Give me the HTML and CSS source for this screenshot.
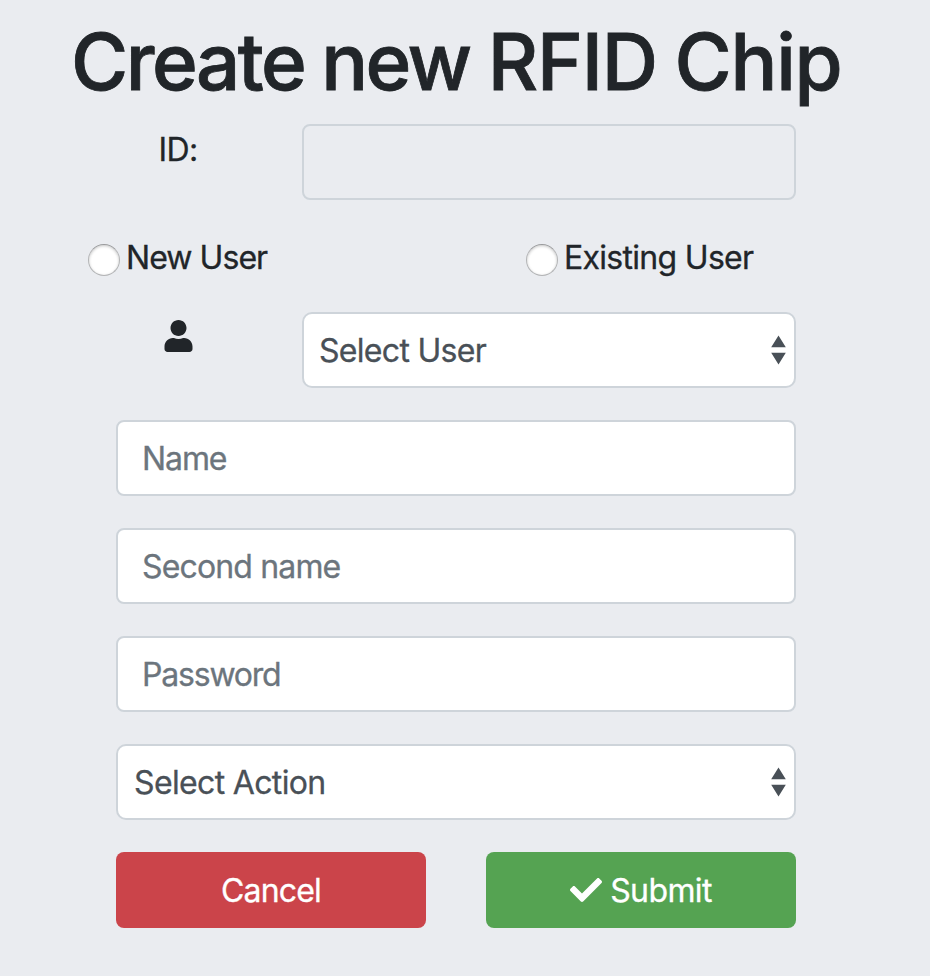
FILE: index.html
```html
<!DOCTYPE html>
<html lang="en">
<head>
<meta charset="utf-8">
<title>Create new RFID Chip</title>
<link rel="stylesheet" href="styles.css">
</head>
<body>
<form class="chip-form">
  <h1 class="title"><span class="lead">Create new</span> RFID Chip</h1>
  <div class="row">
    <label class="label" for="chip"><span class="text w-id">ID:</span></label>
    <input class="control disabled" id="chip" disabled>
  </div>
  <div class="radios">
    <label class="radio"><span class="dot"></span><span class="text w-new">New User</span></label>
    <label class="radio"><span class="dot"></span><span class="text w-existing">Existing User</span></label>
  </div>
  <div class="row">
    <div class="label"><svg class="user" viewBox="0 0 448 512"><path d="M224 256c70.700 0 128-57.300 128-128S294.700 0 224 0 96 57.300 96 128s57.300 128 128 128zm89.600 32h-16.700c-22.200 10.200-46.900 16-72.900 16s-50.600-5.800-72.900-16h-16.700C60.200 288 0 348.200 0 422.400V464c0 26.500 21.500 48 48 48h352c26.500 0 48-21.500 48-48v-41.600c0-74.200-60.200-134.400-134.400-134.400z"/></svg></div>
    <div class="control select"><span class="text w-suser">Select User</span><svg class="arrows" viewBox="0 0 15 30"><path d="M7.500.5L.2 12.300h14.600zM7.500 29.500L.2 17.700h14.600z"/></svg></div>
  </div>
  <div class="control field"><span class="text w-name">Name</span></div>
  <div class="control field"><span class="text w-second">Second name</span></div>
  <div class="control field"><span class="text w-pass">Password</span></div>
  <div class="control select"><span class="text w-saction">Select Action</span><svg class="arrows" viewBox="0 0 15 30"><path d="M7.500.5L.2 12.300h14.600zM7.500 29.500L.2 17.700h14.600z"/></svg></div>
  <div class="actions">
    <button class="btn cancel" type="button"><span class="text w-cancel">Cancel</span></button>
    <button class="btn submit" type="button"><svg class="check" viewBox="0 0 512 512"><path d="M173.898 439.404l-166.400-166.400c-9.997-9.997-9.997-26.206 0-36.204l36.203-36.204c9.997-9.998 26.207-9.998 36.204 0L192 312.690 432.095 72.596c9.997-9.997 26.207-9.997 36.204 0l36.203 36.204c9.997 9.997 9.997 26.206 0 36.204l-294.400 294.401c-9.998 9.997-26.207 9.997-36.204-.001z"/></svg><span class="text w-submit">Submit</span></button>
  </div>
</form>
</body>
</html>
```
FILE: styles.css
```css
* { box-sizing: border-box; }
body { margin: 0; min-height: 976px; background: #eaecf0; color: #212529; font: 32px/48px Inter, sans-serif; }
span { white-space: nowrap; }
.chip-form { width: 680px; margin-left: 116px; padding-top: 14px; display: flex; flex-direction: column; }
.title { margin: 0 -44px 14px -45px; font-size: 78px; line-height: 96px; font-weight: 500; letter-spacing: -1.300px; word-spacing: -1.500px; white-space: nowrap; -webkit-text-stroke: .8px; }
.lead { letter-spacing: -2.500px; }
.row { display: flex; justify-content: space-between; margin-bottom: 32px; }
.label { width: 124px; height: 48px; text-align: center; }
.control { display: flex; align-items: center; width: 100%; height: 76px; margin-bottom: 32px; border: 2px solid #ced4da; border-radius: 8px; background: #fff; color: #495057; }
.row .control { width: 494px; margin: 0; }
.control.disabled { background: transparent; }
.field { padding: 0 24px; color: #6c757d; }
.select { justify-content: space-between; padding: 0 8px 0 15px; border-radius: 10px; }
.arrows { width: 15px; height: 30px; fill: #495057; }
.radios { display: flex; margin: 0 -28px 32px; height: 48px; }
.radio { display: flex; width: 438px; flex-shrink: 0; gap: 6px; }
.dot { width: 32px; height: 32px; margin-top: 12px; border: 1px solid #b3b4b6; border-top-color: #999a9c; border-radius: 50%; background: #fff; box-shadow: inset 0 1px 3px rgba(0, 0, 0, .22); }
.user { width: 29px; height: 32px; margin: 8px 0 0 1px; fill: #212529; }
.actions { display: flex; gap: 60px; }
.btn { flex: 1; height: 76px; display: flex; align-items: center; justify-content: center; gap: 8px; border: 0; border-radius: 8px; padding: 0; color: #fff; font: inherit; }
.cancel { background: #cb444a; }
.submit { background: #55a352; }
.check { width: 32px; height: 32px; fill: #fff; }

/* Tight tracking, one pixel below the line centre */
.text { padding-top: 2px; letter-spacing: -.85px; -webkit-text-stroke: .3px; }
.label .text, .radio .text { display: inline-block; padding-top: 1.500px; }
.w-id { letter-spacing: -.7px; }
.w-new { letter-spacing: -.95px; }
.w-existing, .w-suser { letter-spacing: -.7px; }
.w-saction { letter-spacing: -.65px; padding-left: 1px; }
.w-name { letter-spacing: -1.1px; }
.w-pass { letter-spacing: -1.2px; }
.w-submit { letter-spacing: -.6px; }
```
